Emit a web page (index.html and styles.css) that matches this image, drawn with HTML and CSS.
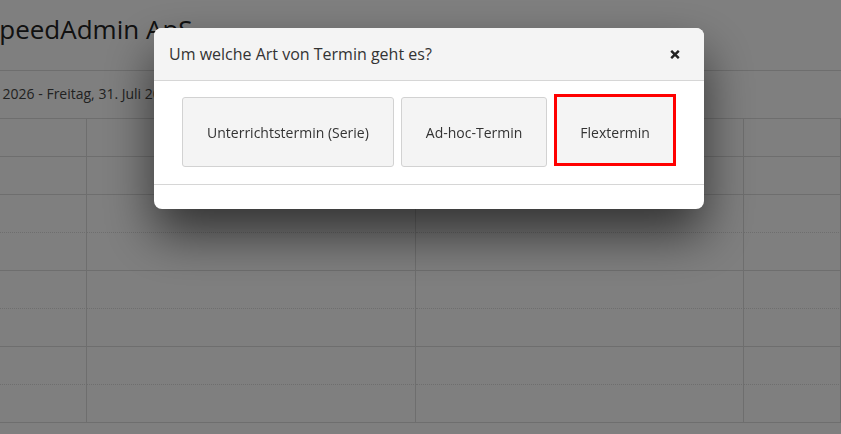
FILE: index.html
```html
<!DOCTYPE html>
<html lang="de">

<head>
    <meta charset="UTF-8">
    <meta name="viewport" content="width=device-width, initial-scale=1.0">
    <title>Kalender</title>
    <link rel="stylesheet" href="styles.css">
</head>

<body>
    <!-- Kopfbereich der Seite -->
    <div class="page-title">
        <h1>SpeedAdmin ApS</h1>
    </div>
    <div class="week-bar">
        <span class="week-range">Montag, 27. Juli 2026 - Freitag, 31. Juli 2026</span>
    </div>

    <!-- Wochenraster -->
    <div class="week-grid">
        <div class="cell"></div><div class="cell"></div><div class="cell"></div><div class="cell"></div>
        <div class="cell"></div><div class="cell"></div><div class="cell"></div><div class="cell"></div>
        <div class="cell half"></div><div class="cell half"></div><div class="cell half"></div><div class="cell half"></div>
        <div class="cell"></div><div class="cell"></div><div class="cell"></div><div class="cell"></div>
        <div class="cell half"></div><div class="cell half"></div><div class="cell half"></div><div class="cell half"></div>
        <div class="cell"></div><div class="cell"></div><div class="cell"></div><div class="cell"></div>
        <div class="cell half"></div><div class="cell half"></div><div class="cell half"></div><div class="cell half"></div>
        <div class="cell"></div><div class="cell"></div><div class="cell"></div><div class="cell"></div>
    </div>

    <!-- Dialog: Terminart wählen -->
    <div class="backdrop"></div>
    <div class="modal">
        <div class="modal-header">
            <span class="modal-title">Um welche Art von Termin geht es?</span>
            <button class="close" type="button">
                <svg width="10" height="9" viewBox="0 0 10 9">
                    <path d="M1.2 0.8 L8.8 8.2 M8.8 0.8 L1.2 8.2" stroke="#222" stroke-width="2.4" fill="none" />
                </svg>
            </button>
        </div>
        <div class="modal-body">
            <button class="type-btn" type="button">Unterrichtstermin (Serie)</button>
            <button class="type-btn" type="button">Ad-hoc-Termin</button>
            <button class="type-btn active" type="button">Flextermin</button>
        </div>
        <div class="modal-footer"></div>
    </div>
</body>

</html>
```

FILE: styles.css
```css
* {
    margin: 0;
    padding: 0;
    box-sizing: border-box;
}

body {
    font-family: "Open Sans", "Liberation Sans", sans-serif;
    background-color: #fff;
    color: #333;
    overflow: hidden;
}

.page-title {
    padding: 11px 0 23px;
    border-bottom: 1px solid #ddd;
}

.page-title h1 {
    font-size: 26px;
    font-weight: normal;
    line-height: 36px;
    color: #222;
    margin-left: -15px;
    white-space: nowrap;
}

.week-bar {
    height: 48px;
    padding-top: 13px;
    border-bottom: 1px solid #ddd;
    white-space: nowrap;
}

.week-range {
    display: block;
    font-size: 14px;
    line-height: 20px;
    color: #444;
    margin-left: -101px;
}

.week-grid {
    display: grid;
    grid-template-columns: 87px 329px 328px 1fr;
}

.cell {
    height: 38px;
    border-right: 1px solid #ddd;
    border-bottom: 1px solid #ddd;
}

.cell.half {
    border-bottom: 1px dotted #ddd;
}

.backdrop {
    position: fixed;
    top: 0;
    left: 0;
    right: 0;
    bottom: 0;
    background-color: rgba(0, 0, 0, 0.5);
}

.modal {
    position: fixed;
    top: 28px;
    left: 154px;
    width: 550px;
    background-color: #fff;
    border-radius: 8px;
    overflow: hidden;
    box-shadow: 0 25px 50px rgba(0, 0, 0, 0.6);
}

.modal-header {
    display: flex;
    align-items: center;
    justify-content: space-between;
    padding: 15px 24px 15px 15px;
    background-color: #f4f4f4;
    border-bottom: 1px solid #d6d6d6;
}

.modal-title {
    font-size: 16px;
    line-height: 22px;
    color: #333;
}

.close {
    display: flex;
    border: 0;
    background: none;
    cursor: pointer;
}

.modal-body {
    display: flex;
    justify-content: center;
    align-items: flex-start;
    gap: 7px;
    padding: 16px 0 17px;
    border-bottom: 1px solid #d6d6d6;
}

.type-btn {
    height: 70px;
    padding: 0 24px;
    font-family: inherit;
    font-size: 14px;
    color: #333;
    background-color: #f4f4f4;
    border: 1px solid #d2d2d2;
    border-radius: 3px;
    cursor: pointer;
}

/* markierte Auswahl */
.type-btn.active {
    height: 72px;
    margin-top: -3px;
    padding: 4px 23px 0;
    border: 3px solid #f00;
    border-radius: 0;
}

.modal-footer {
    height: 24px;
}
```
